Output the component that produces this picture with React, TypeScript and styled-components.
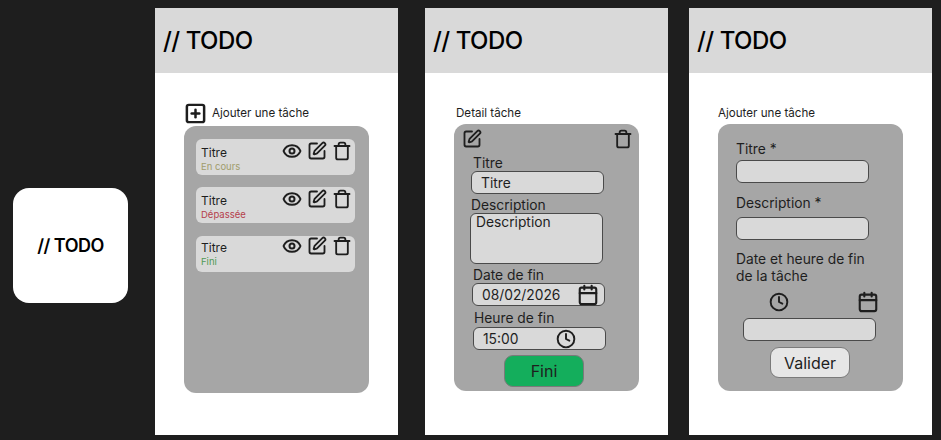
import styled, { createGlobalStyle } from 'styled-components';
import { Calendar, Clock, Eye, SquarePen, SquarePlus, Trash } from 'lucide-react';

interface TaskTypes {
  id: number;
  status: string;
  color: string;
  gap: number;
  pad: number;
}

const tasks: TaskTypes[] = [
  { id: 1, status: 'En cours', color: '#a09c6c', gap: 0, pad: 7 },
  { id: 2, status: 'Dépassée', color: '#b5404c', gap: 12, pad: 7 },
  { id: 3, status: 'Fini', color: '#4f9a55', gap: 13, pad: 5 },
];

const GlobalStyle = createGlobalStyle`
  html, body {
    margin: 0;
    width: 941px;
    height: 440px;
    overflow: hidden;
    background-color: #1e1e1e;
    font-family: Inter, "Liberation Sans", sans-serif;
    color: #1e1e1e;
  }
`;

const Page = styled.div`
  width: 941px;
  height: 440px;
  display: flex;
  align-items: flex-start;
  box-sizing: border-box;
  padding: 8px 0 0 13px;
`;
const Logo = styled.div`
  width: 115px;
  height: 115px;
  margin: 180px 27px 0 0;
  box-sizing: border-box;
  padding-bottom: 1px;
  border-radius: 16px;
  background-color: white;
  color: black;
  display: flex;
  justify-content: center;
  align-items: center;
  font-size: 18px;
  font-weight: 600;
  letter-spacing: -0.5px;
`;
const Screen = styled.div<{ $gap: number }>`
  width: 243px;
  height: 427px;
  margin-right: ${(props) => props.$gap}px;
  background-color: white;
  flex-shrink: 0;
`;
const Header = styled.div`
  height: 65px;
  box-sizing: border-box;
  padding: 0 0 0 8px;
  background-color: #d9d9d9;
  color: black;
  display: flex;
  align-items: center;
  font-size: 24px;
  font-weight: 500;
  letter-spacing: -0.5px;
`;
const Caption = styled.div<{ $left: number }>`
  height: 24px;
  box-sizing: border-box;
  padding-top: 2px;
  margin: 27px 0 0 ${(props) => props.$left}px;
  display: flex;
  align-items: center;
  font-size: 11.6px;
  line-height: 15px;
`;
const AddCaption = styled(Caption)`
  height: 26px;
  padding-top: 0;
  gap: 5px;
`;
const Panel = styled.div<{ $left: number }>`
  width: 185px;
  height: 267px;
  margin-left: ${(props) => props.$left}px;
  box-sizing: border-box;
  border-radius: 12px;
  background-color: #a6a6a6;
  display: flex;
  flex-direction: column;
  align-items: flex-start;
`;
const TaskList = styled.div`
  padding: 13px 0 0 12px;
`;
const TaskCard = styled.div<{ $gap: number; $pad: number }>`
  width: 159px;
  height: 36px;
  margin-top: ${(props) => props.$gap}px;
  box-sizing: border-box;
  padding: ${(props) => props.$pad}px 0 0 5px;
  border-radius: 6px;
  background-color: #d9d9d9;
  display: flex;
  justify-content: space-between;
`;
const TaskText = styled.div`
  display: flex;
  flex-direction: column;
`;
const TaskTitle = styled.span`
  font-size: 12px;
  line-height: 14px;
`;
const TaskStatus = styled.span<{ $color: string }>`
  font-size: 9.5px;
  line-height: 12px;
  margin-top: 1px;
  color: ${(props) => props.$color};
`;
const TaskActions = styled.div`
  display: flex;
  gap: 5px;
  padding-right: 3px;
  height: 20px;
  margin-top: -5px;
`;
const PanelTop = styled.div`
  width: 100%;
  box-sizing: border-box;
  display: flex;
  justify-content: space-between;
  padding: 5px 6px 0 8px;
  height: 30px;
`;
const Label = styled.div<{ $left: number; $top?: number }>`
  margin: ${(props) => props.$top ?? 0}px 0 0 ${(props) => props.$left}px;
  padding-top: 2px;
  font-size: 13.8px;
  line-height: 14px;
  white-space: nowrap;
`;
const WrappedLabel = styled(Label)`
  padding-top: 1px;
  line-height: 17px;
`;
const Field = styled.div<{ $left: number; $top?: number; $height?: number }>`
  width: 133px;
  height: ${(props) => props.$height ?? 23}px;
  margin: ${(props) => props.$top ?? 0}px 0 0 ${(props) => props.$left}px;
  box-sizing: border-box;
  border: 1px solid #4a4a4a;
  border-radius: 6px;
  background-color: #d9d9d9;
  font-size: 13.8px;
  display: flex;
  align-items: center;
  justify-content: space-between;
`;
const FieldText = styled.span<{ $left: number }>`
  margin-left: ${(props) => props.$left}px;
`;
const AreaText = styled.span`
  align-self: flex-start;
  margin: 0 0 0 5px;
  line-height: 17px;
`;
const FieldIcon = styled.span<{ $right: number }>`
  display: flex;
  margin-right: ${(props) => props.$right}px;
`;
const ActionButton = styled.div<{ $left: number; $top: number; $bg: string }>`
  width: 80px;
  height: 32px;
  margin: ${(props) => props.$top}px 0 0 ${(props) => props.$left}px;
  box-sizing: border-box;
  border: 1px solid #7a7a7a;
  border-radius: 9px;
  background-color: ${(props) => props.$bg};
  font-size: 16px;
  display: flex;
  justify-content: center;
  align-items: center;
`;
const ValidateButton = styled(ActionButton)`
  height: 31px;
`;
const DateIcons = styled.div`
  width: 100%;
  box-sizing: border-box;
  display: flex;
  justify-content: space-between;
  align-items: center;
  padding: 0 24px 0 51px;
  height: 33px;
`;

const App = () => {
  return (
    <>
      <GlobalStyle />
      <Page>
        <Logo>// TODO</Logo>
        <Screen $gap={27}>
          <Header>// TODO</Header>
          <AddCaption $left={29}>
            <SquarePlus size={23} strokeWidth={2.6} />
            Ajouter une tâche
          </AddCaption>
          <Panel $left={29}>
            <TaskList>
              {tasks.map((task) => (
                <TaskCard key={task.id} $gap={task.gap} $pad={task.pad}>
                  <TaskText>
                    <TaskTitle>Titre</TaskTitle>
                    <TaskStatus $color={task.color}>{task.status}</TaskStatus>
                  </TaskText>
                  <TaskActions>
                    <Eye size={20} strokeWidth={2.4} />
                    <SquarePen size={20} strokeWidth={2.2} />
                    <Trash size={20} strokeWidth={2.2} />
                  </TaskActions>
                </TaskCard>
              ))}
            </TaskList>
          </Panel>
        </Screen>
        <Screen $gap={21}>
          <Header>// TODO</Header>
          <Caption $left={31}>Detail tâche</Caption>
          <Panel $left={29}>
            <PanelTop>
              <SquarePen size={20} strokeWidth={2.2} />
              <Trash size={20} strokeWidth={2.2} />
            </PanelTop>
            <Label $left={19}>Titre</Label>
            <Field $left={17} $top={1}>
              <FieldText $left={9}>Titre</FieldText>
            </Field>
            <Label $left={17} $top={2}>Description</Label>
            <Field $left={16} $top={1} $height={51}>
              <AreaText>Description</AreaText>
            </Field>
            <Label $left={19} $top={2}>Date de fin</Label>
            <Field $left={18} $top={1}>
              <FieldText $left={9}>08/02/2026</FieldText>
              <FieldIcon $right={5}>
                <Calendar size={22} strokeWidth={2.3} />
              </FieldIcon>
            </Field>
            <Label $left={20} $top={3}>Heure de fin</Label>
            <Field $left={19} $top={2}>
              <FieldText $left={9}>15:00</FieldText>
              <FieldIcon $right={29}>
                <Clock size={20} strokeWidth={2.3} />
              </FieldIcon>
            </Field>
            <ActionButton $left={50} $top={5} $bg="#14ae5c">Fini</ActionButton>
          </Panel>
        </Screen>
        <Screen $gap={0}>
          <Header>// TODO</Header>
          <Caption $left={29}>Ajouter une tâche</Caption>
          <Panel $left={29}>
            <Label $left={18} $top={16}>Titre *</Label>
            <Field $left={18} $top={4} />
            <Label $left={18} $top={11}>Description *</Label>
            <Field $left={18} $top={7} />
            <WrappedLabel $left={18} $top={10}>
              Date et heure de fin
              <br />
              de la tâche
            </WrappedLabel>
            <DateIcons>
              <Clock size={20} strokeWidth={2.3} />
              <Calendar size={22} strokeWidth={2.3} />
            </DateIcons>
            <Field $left={25} />
            <ValidateButton $left={52} $top={6} $bg="#e6e6e6">Valider</ValidateButton>
          </Panel>
        </Screen>
      </Page>
    </>
  );
};

export default App;
